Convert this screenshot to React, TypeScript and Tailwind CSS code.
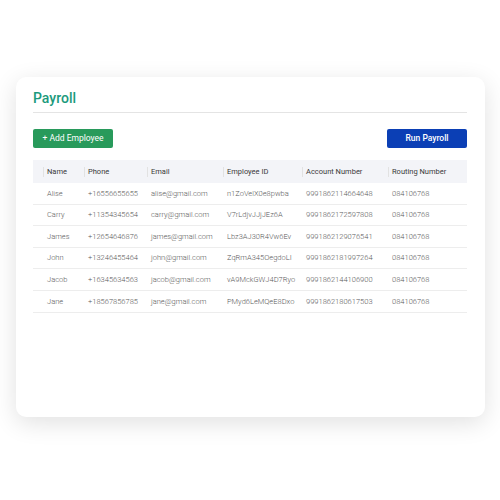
import React from 'react';

interface Employee {
  name: string;
  phone: string;
  email: string;
  employeeId: string;
  account: string;
  routing: string;
}

const employees: Employee[] = [
  { name: 'Alise', phone: '+16556655655', email: 'alise@gmail.com', employeeId: 'n1ZoVelX0e8pwba', account: '9991862114664648', routing: '084106768' },
  { name: 'Carry', phone: '+11354345654', email: 'carry@gmail.com', employeeId: 'V7rLdjvJJjJEz6A', account: '9991862172597808', routing: '084106768' },
  { name: 'James', phone: '+12654646876', email: 'james@gmail.com', employeeId: 'Lbz3AJ30R4Vw6Ev', account: '9991862129076541', routing: '084106768' },
  { name: 'John', phone: '+13246455464', email: 'john@gmail.com', employeeId: 'ZqRmA345OegdoLI', account: '9991862181997264', routing: '084106768' },
  { name: 'Jacob', phone: '+16345634563', email: 'jacob@gmail.com', employeeId: 'vA9MckGWJ4D7Ryo', account: '9991862144106900', routing: '084106768' },
  { name: 'Jane', phone: '+18567856785', email: 'jane@gmail.com', employeeId: 'PMyd6LeMQeE8Dxo', account: '9991862180617503', routing: '084106768' },
];

const headers = ['Name', 'Phone', 'Email', 'Employee ID', 'Account Number', 'Routing Number'];

// column widths, first one is the lead-in before "Name"
const cols = 'grid grid-cols-[10px_41px_63px_76px_79px_86px_79px]';

const App: React.FC = () => {
  return (
    <div className="w-[500px] h-[500px] bg-white pt-[77px] pl-[16px] font-['Roboto',sans-serif]">
      <div className="w-[469px] h-[340px] bg-white rounded-[10px] shadow-[0_6px_24px_rgba(0,0,0,0.12)] pl-[17px] pr-[18px] pt-[9px]">
        {/* Header */}
        <h1 className="h-[26px] leading-[24px] text-[14px] font-medium text-[#1c9a7c]">Payroll</h1>
        <div className="h-px bg-[#e4e4e4]" />

        {/* Actions */}
        <div className="flex items-center justify-between mt-[16px]">
          <button className="w-[80px] h-[19px] rounded-[2px] bg-[#289a5b] text-white text-[8.5px] leading-none">
            + Add Employee
          </button>
          <button className="w-[80px] h-[19px] rounded-[2px] bg-[#0b3fb5] text-white text-[8.5px] font-medium leading-none">
            Run Payroll
          </button>
        </div>

        {/* Table */}
        <div className="mt-[12px] text-[7.5px]">
          <div className={`${cols} h-[23px] items-center bg-[#f3f4f8] text-[#3a3a3a] font-normal`}>
            <div />
            {headers.map(h => (
              <div key={h} className="flex items-center h-full">
                <div className="w-px h-[10px] bg-[#e2e2e2]" />
                <span className="pl-[3px]">{h}</span>
              </div>
            ))}
          </div>
          {employees.map(e => (
            <div
              key={e.name}
              className={`${cols} h-[21.6px] items-center border-b border-[#ededed] text-[#5a5a5a] font-light`}
            >
              <div />
              {[e.name, e.phone, e.email, e.employeeId, e.account, e.routing].map((v, i) => (
                <div key={i} className="pl-[4px] whitespace-nowrap">{v}</div>
              ))}
            </div>
          ))}
        </div>
      </div>
    </div>
  );
};

export default App;
